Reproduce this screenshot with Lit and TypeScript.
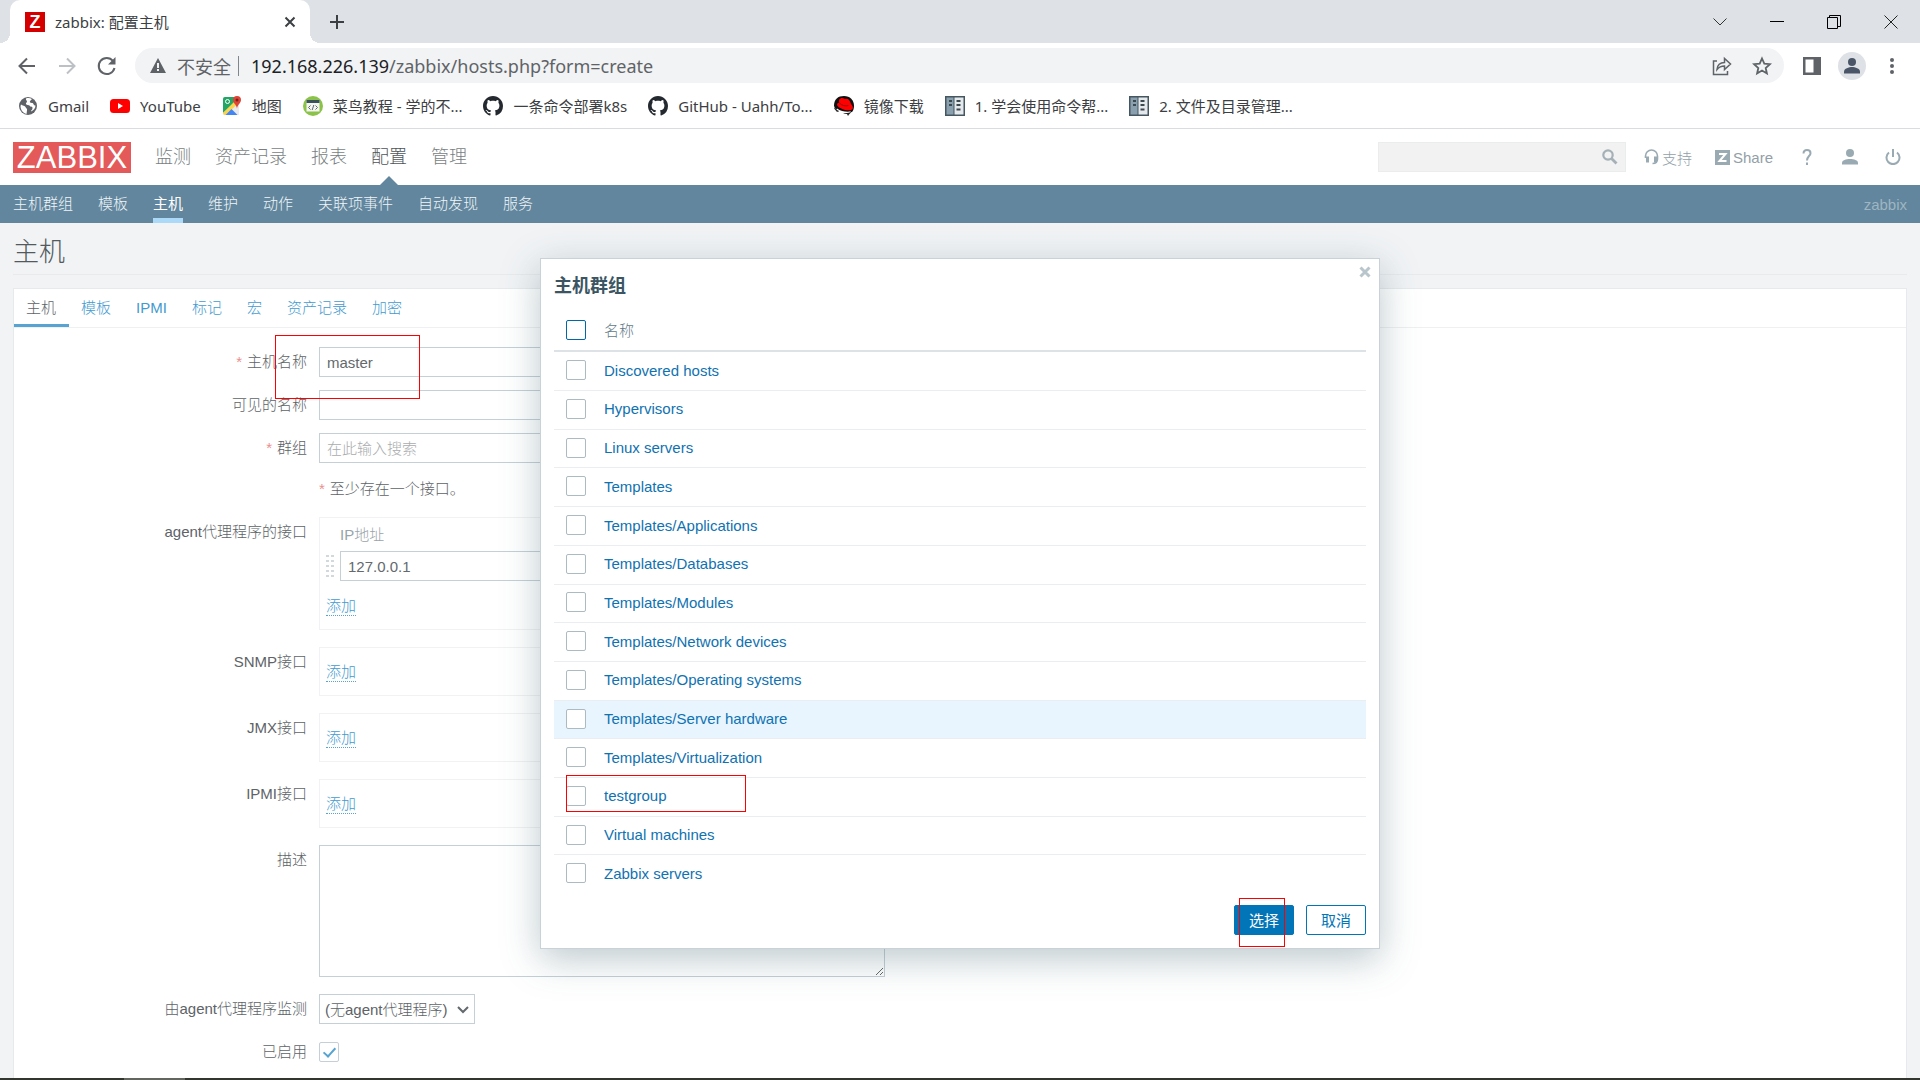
import { LitElement, html, css, svg } from "lit";
import { customElement } from "lit/decorators.js";
import { classMap } from "lit/directives/class-map.js";

const sansStack = css`"Liberation Sans", "Noto Sans CJK SC", sans-serif`;
const chromeStack = css`"Noto Sans", "Noto Sans CJK SC", sans-serif`;

const icons = {
  globe: svg`<svg class="icon" viewBox="0 0 20 20"><circle cx="10" cy="10" r="9" fill="#5f6368"/><path d="M3 8.500c1.500 1.500 4 1 4.500 2.500s2 1.500 1.500 3.500l-.5 3.500C5 17 2.500 14 2.500 10zM8 2.500c-.5 2 1 1.500 1 3s-1.500 1-1 2.500 3 .5 4 2 2.500 0 2.500 2-1.500 2-1.500 3.500c2.500-1 4.500-3 4.500-6-2.500 0-1.500-2.500-3.500-2.500s-3-1-1.500-2.500 1.500-1 1-1.700C12 2 10 1.800 8 2.500z" fill="#fff"/></svg>`,
  youtube: svg`<svg class="icon" viewBox="0 0 20 20"><rect x="0" y="3" width="20" height="14" rx="3.500" fill="#f00"/><path d="M8 7v6l5-3z" fill="#fff"/></svg>`,
  maps: svg`<svg class="icon" viewBox="0 0 20 20"><path d="M1 3a2 2 0 0 1 2-2h12l2 3v15H3a2 2 0 0 1-2-2z" fill="#e8eaed"/><path d="M1 3a2 2 0 0 1 2-2h11l1 3L1 17z" fill="#23a566"/><path d="M1 17L13 5l2.500 3L4 19H3a2 2 0 0 1-2-2z" fill="#fdd34a"/><path d="M3.500 19l6-6 6 6z" fill="#4285f4"/><circle cx="5.500" cy="5.500" r="2" fill="none" stroke="#fff"/><path d="M15 0a4 4 0 0 1 4 4c0 3-3.500 4.500-4 8.500-.5-4-4-5.500-4-8.500a4 4 0 0 1 4-4z" fill="#dc4436"/><circle cx="15" cy="4" r="1.500" fill="#7d1f18"/></svg>`,
  runoob: svg`<svg class="icon" viewBox="0 0 20 20"><circle cx="10" cy="10" r="10" fill="#8bc34a"/><rect x="3.500" y="4.500" width="13" height="11" fill="#f4f6ee"/><path d="M3.500 4h13v3h-13z" fill="#37505c"/><path d="M7.500 9.500L5.500 11.500l2 2M12.500 9.500l2 2-2 2M10.800 9l-1.600 5" fill="none" stroke="#59687a"/></svg>`,
  github: svg`<svg class="icon" viewBox="0 0 16 16"><path fill="#24292f" fill-rule="evenodd" d="M8 0C3.580 0 0 3.580 0 8c0 3.540 2.290 6.530 5.470 7.590.4.070.55-.17.55-.38 0-.19-.01-.82-.01-1.490-2.010.37-2.530-.49-2.690-.94-.09-.23-.48-.94-.82-1.130-.28-.15-.68-.52-.01-.53.63-.01 1.080.58 1.230.82.72 1.210 1.870.87 2.330.66.07-.52.28-.87.51-1.070-1.780-.2-3.640-.89-3.640-3.950 0-.87.31-1.590.82-2.150-.08-.2-.36-1.020.08-2.120 0 0 .67-.21 2.200.82.640-.18 1.320-.27 2-.27s1.360.09 2 .27c1.530-1.040 2.200-.82 2.200-.82.440 1.100.16 1.920.08 2.120.51.56.82 1.270.82 2.150 0 3.070-1.870 3.750-3.650 3.950.29.25.54.73.54 1.480 0 1.070-.01 1.930-.01 2.200 0 .21.15.46.55.38A8.010 8.010 0 0 0 16 8c0-4.420-3.580-8-8-8z"/></svg>`,
  redhat: svg`<svg class="icon" viewBox="0 0 20 20"><path d="M0 10C0 3 4 0 10 0s10 4 10 10c0 3-1 5-2 6H3z" fill="#111"/><path d="M5 4c2-3 4-2 6-1 3-1 5 1 6 5 2 2 3 5 0 6-4 1-12-1-14-5 0-2 1-2 2-2z" fill="#f00"/><path d="M5.500 7c2 2.500 6 3.500 9 2.500" fill="none" stroke="#900"/><path d="M3 12.500c4 3 9 3.500 14 3l-2 2H5l-3-3z" fill="#fff"/><path d="M0 11c1 2 3 3 5 4l-1 1c-2-1-4-2.500-4-5zM9 17c3 .5 6 0 9-1.500l-3 3-1 1.500-1-2c-1.500 0-3 0-4-1z" fill="#222"/></svg>`,
  cabinet: svg`<svg class="icon" viewBox="0 0 20 20"><path d="M0 0h20v20H0z" fill="#455660"/><path d="M1.500 1.500h7v17h-7z" fill="#8aa0af"/><path d="M9.500 1.500h9v17h-9z" fill="#e4e9ec"/><path d="M4 4h3v2H4zM4 8h3v2H4zM11.500 4h4v2h-4zM11.500 8h4v2h-4zM11.500 12.500h4v2h-4z" fill="#3c4950"/></svg>`,
};

@customElement("browser-chrome")
export class BrowserChrome extends LitElement {
  static styles = css`
    :host { display: block; font-family: ${chromeStack}; color: #3c4043; }
    button { border: 0; padding: 0; background: none; display: grid; place-items: center; color: inherit; font: inherit; }
    svg { display: block; }
    .icon { width: 20px; height: 20px; flex: none; }
    .strip { display: flex; align-items: center; height: 43px; padding: 0 1px 0 10px; background: #dee1e6; }
    .tab { position: relative; display: flex; align-items: center; align-self: stretch; width: 300px; box-sizing: border-box; padding: 0 10px 0 15px; gap: 10px; background: #fff; border-radius: 10px 10px 0 0; font-size: 15px; }
    .tab::before, .tab::after { content: ""; position: absolute; bottom: 0; width: 10px; height: 10px; }
    .tab::before { left: -10px; background: radial-gradient(circle at 0 0, transparent 10px, #fff 10px); }
    .tab::after { right: -10px; background: radial-gradient(circle at 100% 0, transparent 10px, #fff 10px); }
    .favicon { width: 20px; height: 20px; background: #d40000; color: #fff; font: 700 18px/20px ${sansStack}; text-align: center; }
    .title { flex: 1; }
    .newtab { margin-left: 20px; }
    .windows { display: flex; margin-left: auto; }
    .windows button { width: 57px; height: 37px; }
    .toolbar { display: flex; align-items: center; height: 45px; padding: 0 8px 0 12px; }
    .nav { width: 30px; height: 30px; margin-right: 10px; }
    .omnibox { flex: 1; display: flex; align-items: center; height: 35px; margin: 0 8px 0 3px; padding: 0 12px 0 15px; border-radius: 18px; background: #f1f3f4; font-size: 18px; color: #5f6368; }
    .omnibox button + button { margin-left: 20px; }
    .warn { margin-right: 11px; }
    .divider { width: 1px; height: 20px; margin: 0 12px 0 7px; background: #80868b; }
    .url { flex: 1; }
    .host { color: #202124; }
    .side { width: 40px; height: 30px; }
    .bookmarks { display: flex; align-items: center; gap: 21px; height: 40px; padding: 0 18px; border-bottom: 1px solid #dadce0; }
    .bookmark { display: flex; align-items: center; gap: 10px; height: 36px; padding-bottom: 4px; box-sizing: border-box; color: #3c4043; text-decoration: none; font-size: 15px; line-height: 20px; white-space: nowrap; }
  `;

  private bookmarks = [
    { icon: icons.globe, label: "Gmail" },
    { icon: icons.youtube, label: "YouTube" },
    { icon: icons.maps, label: "地图" },
    { icon: icons.runoob, label: "菜鸟教程 - 学的不..." },
    { icon: icons.github, label: "一条命令部署k8s" },
    { icon: icons.github, label: "GitHub - Uahh/To..." },
    { icon: icons.redhat, label: "镜像下载" },
    { icon: icons.cabinet, label: "1. 学会使用命令帮..." },
    { icon: icons.cabinet, label: "2. 文件及目录管理..." },
  ];

  render() {
    return html`
      <div class="strip">
        <div class="tab">
          <span class="favicon">Z</span>
          <span class="title">zabbix: 配置主机</span>
          <button aria-label="close tab"><svg width="20" height="20" viewBox="0 0 20 20" stroke="#3c4043" stroke-width="2"><path d="M5.500 5.500l9 9M14.500 5.500l-9 9"/></svg></button>
        </div>
        <button class="newtab" aria-label="new tab"><svg width="14" height="14" viewBox="0 0 14 14" stroke="#3c4043" stroke-width="2"><path d="M7 0v14M0 7h14"/></svg></button>
        <div class="windows">
          <button><svg width="14" height="8" viewBox="0 0 14 8" fill="none" stroke="#333"><path d="M.5.5l6.500 6.500L13.500.5"/></svg></button>
          <button><svg width="14" height="2" viewBox="0 0 14 2"><path d="M0 0h14v1H0z"/></svg></button>
          <button><svg width="14" height="14" viewBox="0 0 14 14" fill="none" stroke="#000"><path d="M.5 2.500h10v11h-10zM2.500 2.500v-2h11v11h-3"/></svg></button>
          <button><svg width="14" height="14" viewBox="0 0 14 14" stroke="#222"><path d="M.5.5l13 13M13.500.5l-13 13"/></svg></button>
        </div>
      </div>
      <div class="toolbar">
        <button class="nav"><svg width="20" height="20" viewBox="0 0 20 20" fill="none" stroke="#5f6368" stroke-width="2"><path d="M18 10H3M10 2.500L2.500 10l7.500 7.500"/></svg></button>
        <button class="nav"><svg width="20" height="20" viewBox="0 0 20 20" fill="none" stroke="#bdc1c6" stroke-width="2"><path d="M2 10h15M10 2.500l7.500 7.500-7.500 7.500"/></svg></button>
        <button class="nav"><svg width="20" height="20" viewBox="0 0 20 20" fill="none" stroke="#5f6368" stroke-width="2"><path d="M17.500 12a8 8 0 1 1-1.500-7l1 1"/><path d="M18.500 1v7.500H11z" fill="#5f6368" stroke="none"/></svg></button>
        <div class="omnibox">
          <svg class="warn" width="16" height="15" viewBox="0 0 16 15"><path d="M8 0l8 15H0z" fill="#5f6368"/><path d="M7 5h2v5H7zM7 11h2v2H7z" fill="#f1f3f4"/></svg>
          <span>不安全</span><span class="divider"></span>
          <span class="url"><span class="host">192.168.226.139</span>/zabbix/hosts.php?form=create</span>
          <button><svg width="20" height="20" viewBox="0 0 20 20" fill="none" stroke="#5f6368" stroke-width="1.500"><path d="M5 5H1.500v13.500h14V15M5 13.500c.5-5 3-7 7.500-7V2.500l6 5.500-6 5.500V10c-3.500 0-5.500 1-7.500 3.500z"/></svg></button>
          <button><svg width="20" height="20" viewBox="0 0 20 20" fill="none" stroke="#5f6368" stroke-width="1.800"><path d="M10 2.500l2.300 5.200 5.600.5-4.200 3.800 1.200 5.500-4.900-2.900-4.900 2.900 1.200-5.500L2.100 8.200l5.600-.5z"/></svg></button>
        </div>
        <button class="side"><svg width="18" height="18" viewBox="0 0 18 18"><path d="M0 0h18v18H0z" fill="#5f6368"/><path d="M2.500 2.500h8v13h-8z" fill="#fff"/></svg></button>
        <button class="side"><svg width="28" height="28" viewBox="0 0 28 28"><circle cx="14" cy="14" r="14" fill="#dee1e6"/><circle cx="14" cy="10" r="4" fill="#4a5668"/><path d="M6 21.500v-2c0-3 5-4.500 8-4.500s8 1.500 8 4.500v2z" fill="#4a5668"/></svg></button>
        <button class="side"><svg width="4" height="16" viewBox="0 0 4 16" fill="#5f6368"><circle cx="2" cy="2" r="2"/><circle cx="2" cy="8" r="2"/><circle cx="2" cy="14" r="2"/></svg></button>
      </div>
      <nav class="bookmarks">
        ${this.bookmarks.map((b) => html`<a class="bookmark" href="#">${b.icon}<span>${b.label}</span></a>`)}
      </nav>
    `;
  }
}

@customElement("zabbix-header")
export class ZabbixHeader extends LitElement {
  static styles = css`
    :host { display: block; font-family: ${sansStack}; font-weight: 300; font-size: 15px; }
    a { text-decoration: none; color: inherit; }
    svg { display: block; }
    .top { display: flex; align-items: center; height: 56px; padding: 0 12px 0 13px; background: #fff; color: #92a0a8; }
    .logo { width: 118px; height: 31px; margin-right: 24px; background: #e45959; color: #fff; font-size: 31px; line-height: 32px; text-align: center; }
    .menu { display: flex; align-self: stretch; gap: 24px; font-size: 18px; line-height: 56px; color: #797f83; }
    .menu a { position: relative; }
    .menu .current { color: #4d5458; }
    .menu .current::after { content: ""; position: absolute; left: 50%; bottom: 0; margin-left: -9px; border: 9px solid transparent; border-top: 0; border-bottom-color: #61869d; }
    .search { display: flex; align-items: center; width: 248px; height: 30px; margin-left: auto; margin-right: 18px; box-sizing: border-box; border: 1px solid #ebeded; background: #f2f2f2; }
    .search input { flex: 1; min-width: 0; border: 0; background: none; outline: 0; font: inherit; }
    .search button { border: 0; background: none; padding: 0 7px; }
    .tool { display: flex; align-items: center; gap: 3px; height: 30px; margin-right: 23px; }
    .tool + .glyph { margin-left: -4px; }
    .glyph { display: grid; place-items: center; width: 30px; height: 30px; margin-right: 13px; }
    .glyph:last-child { margin-right: 0; }
    .sub { display: flex; align-items: center; gap: 25px; height: 38px; padding: 0 13px; background: #61869d; color: #f0f5f8; }
    .sub a { height: 32px; line-height: 35px; border-bottom: 5px solid transparent; }
    .sub a.current { color: #fff; font-weight: 400; border-color: #acd9f7; }
    .server { margin-left: auto; color: #9fb5c2; }
  `;

  render() {
    const menu = ["监测", "资产记录", "报表", "配置", "管理"];
    const sub = ["主机群组", "模板", "主机", "维护", "动作", "关联项事件", "自动发现", "服务"];
    return html`
      <div class="top">
        <a class="logo" href="#">ZABBIX</a>
        <nav class="menu">
          ${menu.map((m) => html`<a href="#" class=${classMap({ current: m === "配置" })}>${m}</a>`)}
        </nav>
        <form class="search">
          <input type="search" aria-label="search" />
          <button type="button"><svg width="16" height="16" viewBox="0 0 16 16" fill="none" stroke="#a5b1b7"><circle cx="6" cy="6" r="4.700" stroke-width="2.200"/><path d="M9.500 9.500l5 5" stroke-width="2.800"/></svg></button>
        </form>
        <a class="tool" href="#"><svg width="15" height="16" viewBox="0 0 15 16" fill="none" stroke="#9aaab3"><path d="M1.500 9V7a6 6 0 0 1 12 0v3c0 3-2 4.500-5 4.500" stroke-width="1.600"/><path d="M3.500 7.500v6M11.500 7.500v6" stroke-width="3"/></svg>支持</a>
        <a class="tool" href="#"><svg width="15" height="15" viewBox="0 0 15 15"><path d="M0 0h15v15H0z" fill="#9aaab3"/><path d="M4 4h6.500L4.500 11H11.500" fill="none" stroke="#fff" stroke-width="2"/></svg>Share</a>
        <a class="glyph" href="#" aria-label="help"><svg width="10" height="16" viewBox="0 0 10 16" fill="none" stroke="#9aaab3" stroke-width="2"><path d="M1.500 4.500c0-2 1.500-3.500 3.500-3.500s3.500 1.300 3.500 3.200c0 2.800-3.500 3-3.500 7.300M5 13.500v2.500"/></svg></a>
        <a class="glyph" href="#"><svg width="16" height="16" viewBox="0 0 16 16" fill="#9aaab3"><circle cx="8" cy="4" r="4"/><path d="M0 15.500v-1.500c0-3 4-4 8-4s8 1 8 4v1.500z"/></svg></a>
        <a class="glyph" href="#"><svg width="16" height="16" viewBox="0 0 16 16" fill="none" stroke="#9aaab3" stroke-width="2"><path d="M8 0v8M4 3.500a6.500 6.500 0 1 0 8 0"/></svg></a>
      </div>
      <nav class="sub">
        ${sub.map((s) => html`<a href="#" class=${classMap({ current: s === "主机" })}>${s}</a>`)}
        <span class="server">zabbix</span>
      </nav>
    `;
  }
}

@customElement("host-form")
export class HostForm extends LitElement {
  static styles = css`
    :host { flex: 1; display: flex; flex-direction: column; min-height: 0; padding: 0 13px; background: #f1f3f5; font-family: ${sansStack}; font-weight: 300; font-size: 15px; color: #5d6367; }
    h1 { margin: 0 0 13px; height: 51px; line-height: 59px; border-bottom: 1px solid #e8eaec; font-size: 26px; font-weight: 300; color: #53595d; }
    .panel { flex: 1; min-height: 0; overflow: hidden; background: #fff; border: 1px solid #e6eaec; border-bottom: 0; }
    .tabs { display: flex; height: 38px; border-bottom: 1px solid #eef0f1; }
    .tab { padding: 0 13px 0 12px; line-height: 37px; height: 35px; border-bottom: 3px solid transparent; text-decoration: none; color: #439ad0; }
    .tab.current { color: #5d6367; border-color: #57a3d1; }
    form { display: grid; grid-template-columns: 293px 1fr; column-gap: 12px; row-gap: 13px; padding-top: 19px; }
    .label { text-align: right; line-height: 30px; }
    .required::before { content: "*"; margin-right: 5px; color: #ea8f8f; }
    .text { width: 566px; height: 30px; box-sizing: border-box; padding: 0 7px; border: 1px solid #c4d0d5; background: #fff; color: #63696d; font: inherit; outline: 0; border-radius: 0; }
    .text::placeholder { color: #a9acae; }
    .field { display: flex; align-items: center; min-height: 30px; }
    .note { min-height: 28px; line-height: 26px; align-items: flex-start; }
    .box { display: grid; align-content: center; width: 880px; box-sizing: border-box; height: 49px; margin-bottom: 4px; padding: 0 6px; border: 1px solid #f0f2f3; }
    .agent { height: 113px; align-content: start; padding-top: 5px; }
    .caption { padding: 0 0 4px 14px; line-height: 24px; color: #98a3aa; }
    .address { display: flex; align-items: center; gap: 6px; margin-bottom: 15px; }
    .grip { width: 8px; height: 24px; display: block; }
    .add { justify-self: start; border: 0; border-bottom: 1px dotted #57a3d1; padding: 0; background: none; font: inherit; line-height: 19px; color: #439ad0; }
    .area { display: block; height: 132px; margin-bottom: 4px; resize: both; }
    .choice { position: relative; display: flex; }
    .choice select { appearance: none; width: 156px; height: 30px; padding: 0 24px 0 5px; border: 1px solid #c4d0d5; border-radius: 0; background: #fff; color: inherit; font: inherit; }
    .choice svg { position: absolute; right: 6px; top: 12px; pointer-events: none; }
    .tick { appearance: none; display: grid; place-items: center; width: 20px; height: 20px; margin: 0; box-sizing: border-box; border: 1px solid #c4d0d5; border-radius: 2px; background: #fff; }
    .tick:checked::before { content: ""; width: 5px; height: 10px; margin-bottom: 3px; border: solid #57a3d1; border-width: 0 2px 2px 0; transform: rotate(42deg); }
  `;

  private addRow(label: string) {
    return html`<span class="label">${label}</span>
      <div class="box"><button type="button" class="add">添加</button></div>`;
  }

  render() {
    const tabs = ["主机", "模板", "IPMI", "标记", "宏", "资产记录", "加密"];
    return html`
      <h1>主机</h1>
      <section class="panel">
        <nav class="tabs">
          ${tabs.map((t, i) => html`<a href="#" class=${classMap({ tab: true, current: i === 0 })}>${t}</a>`)}
        </nav>
        <form>
          <label class="label required" for="host">主机名称</label>
          <input class="text" id="host" value="master" />
          <label class="label" for="visible">可见的名称</label>
          <input class="text" id="visible" />
          <label class="label required" for="groups">群组</label>
          <input class="text" id="groups" placeholder="在此输入搜索" />
          <span></span>
          <div class="field note required">至少存在一个接口。</div>
          <label class="label" for="ip">agent代理程序的接口</label>
          <div class="box agent">
            <label class="caption" for="ip">IP地址</label>
            <div class="address">
              <svg class="grip" viewBox="0 0 8 24" fill="#d2d9dd">${[0, 5, 10, 15, 20].map((y) => svg`<path d="M0 ${y + 1}h3v2H0zM5 ${y + 1}h3v2H5z"/>`)}</svg>
              <input class="text" id="ip" value="127.0.0.1" />
            </div>
            <button type="button" class="add">添加</button>
          </div>
          ${["SNMP接口", "JMX接口", "IPMI接口"].map((l) => this.addRow(l))}
          <label class="label" for="description">描述</label>
          <textarea class="text area" id="description"></textarea>
          <label class="label" for="proxy">由agent代理程序监测</label>
          <div class="field">
            <span class="choice">
              <select id="proxy"><option>(无agent代理程序)</option></select>
              <svg width="12" height="8" viewBox="0 0 12 8" fill="none" stroke="#63696d" stroke-width="2"><path d="M1 1l5 5 5-5"/></svg>
            </span>
          </div>
          <label class="label" for="enabled">已启用</label>
          <div class="field"><input class="tick" type="checkbox" id="enabled" checked /></div>
        </form>
      </section>
    `;
  }
}

@customElement("group-dialog")
export class GroupDialog extends LitElement {
  static styles = css`
    :host { display: block; font-family: ${sansStack}; font-size: 15px; }
    .dialog { position: relative; width: 840px; box-sizing: border-box; padding: 12px 13px 13px; background: #fff; border: 1px solid #c8d2d8; box-shadow: 0 10px 35px rgba(66, 100, 113, 0.35); }
    .close { position: absolute; top: 7px; right: 8px; padding: 0; border: 0; background: none; }
    .close svg { display: block; }
    h2 { margin: 0; height: 40px; line-height: 30px; font-size: 18px; font-weight: 700; color: #3c5563; }
    table { width: 100%; height: 582px; border-collapse: collapse; }
    th, td { padding: 0 0 2px; text-align: left; border-bottom: 1px solid #ebeef0; }
    tbody tr:last-child td { border-bottom: 0; }
    th { height: 37px; border-bottom: 2px solid #dce2e5; font-weight: 300; color: #5f7987; }
    .pick { width: 50px; padding-left: 12px; box-sizing: border-box; }
    .pick input { appearance: none; display: block; width: 20px; height: 20px; margin: 0; box-sizing: border-box; border: 1px solid #acbbc2; border-radius: 2px; background: #fff; }
    th.pick input { border-color: #0268a5; }
    a { color: #0f72b1; text-decoration: none; }
    .hover td { background: #e8f5ff; }
    .actions { display: flex; justify-content: flex-end; gap: 12px; padding-top: 12px; }
    .actions button { width: 60px; height: 30px; padding: 0 0 2px; border: 1px solid #0275b8; border-radius: 2px; background: #fff; color: #0275b8; font: inherit; }
    .actions .primary { background: #0275b8; color: #fff; }
  `;

  private groups = [
    "Discovered hosts", "Hypervisors", "Linux servers", "Templates", "Templates/Applications",
    "Templates/Databases", "Templates/Modules", "Templates/Network devices",
    "Templates/Operating systems", "Templates/Server hardware", "Templates/Virtualization",
    "testgroup", "Virtual machines", "Zabbix servers",
  ];

  render() {
    return html`
      <section class="dialog" role="dialog" aria-labelledby="title">
        <button class="close" aria-label="close"><svg width="12" height="12" viewBox="0 0 12 12" stroke="#b8c5cb" stroke-width="3"><path d="M1.500 1.500l9 9M10.500 1.500l-9 9"/></svg></button>
        <h2 id="title">主机群组</h2>
        <table>
          <thead>
            <tr><th class="pick"><input type="checkbox" aria-label="all" /></th><th>名称</th></tr>
          </thead>
          <tbody>
            ${this.groups.map((g) => html`
              <tr class=${classMap({ hover: g === "Templates/Server hardware" })}>
                <td class="pick"><input type="checkbox" aria-label=${g} /></td>
                <td><a href="#">${g}</a></td>
              </tr>`)}
          </tbody>
        </table>
        <div class="actions">
          <button class="primary">选择</button>
          <button>取消</button>
        </div>
      </section>
    `;
  }
}

@customElement("app-root")
export class AppRoot extends LitElement {
  static styles = css`
    :host { position: relative; display: flex; flex-direction: column; height: 100vh; overflow: hidden; background: #fff; }
    .taskbar { height: 2px; background: #33352f; }
    .running { width: 61px; height: 2px; margin-left: 124px; background: #63655f; }
    .overlay { position: absolute; inset: 0; display: flex; justify-content: center; align-items: flex-start; padding-top: 258px; }
    .mark { position: absolute; box-sizing: border-box; border: 1px solid #f00; pointer-events: none; }
    .mark-name { left: 275px; top: 335px; width: 145px; height: 64px; }
    .mark-group { left: 566px; top: 775px; width: 180px; height: 37px; }
    .mark-select { left: 1239px; top: 898px; width: 46px; height: 49px; }
  `;

  render() {
    return html`
      <browser-chrome></browser-chrome>
      <zabbix-header></zabbix-header>
      <host-form></host-form>
      <div class="taskbar"><div class="running"></div></div>
      <div class="overlay"><group-dialog></group-dialog></div>
      <div class="mark mark-name"></div>
      <div class="mark mark-group"></div>
      <div class="mark mark-select"></div>
    `;
  }
}
